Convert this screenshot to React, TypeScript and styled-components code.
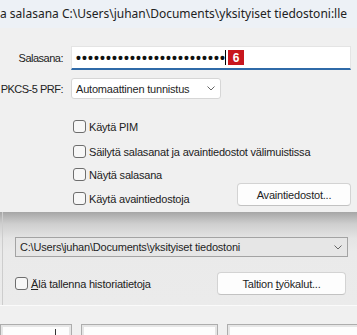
import React from "react";
import styled, { createGlobalStyle } from "styled-components";

const Global = createGlobalStyle`
  html, body { margin: 0; padding: 0; width: 357px; height: 335px; overflow: hidden; background: #f0f0f0; }
  body { font-family: "Liberation Sans", Arial, sans-serif; font-size: 11px; letter-spacing: -0.2px; color: #1f1f1f; }
  * { box-sizing: border-box; }
`;

const Page = styled.div`
  width: 357px;
  height: 335px;
  display: flex;
  flex-direction: column;
  overflow: hidden;
`;

const TitleBar = styled.div`
  height: 28px;
  flex: none;
  background: #edf1f6;
  font-family: "Noto Sans", sans-serif;
  font-size: 12px;
  letter-spacing: 0;
  line-height: 28px;
  color: #222;
  white-space: nowrap;
  overflow: hidden;
`;

const DialogBody = styled.div`
  height: 184px;
  flex: none;
  background: #f0f0f0;
  padding: 18px 6px 0 0;
  display: flex;
  flex-direction: column;
`;

const FormGrid = styled.div`
  display: grid;
  grid-template-columns: 63px 1fr;
  column-gap: 8px;
  row-gap: 8px;
  align-items: center;
`;

const FieldLabel = styled.div`
  text-align: right;
  white-space: nowrap;
  letter-spacing: -0.5px;
  color: #222;
`;

const PasswordBox = styled.div`
  height: 24px;
  background: #fff;
  border: 1px solid #e4e4e4;
  border-bottom: 2px solid #2f6aa8;
  display: flex;
  align-items: center;
  padding-left: 4px;
`;

const Dots = styled.span`
  font-weight: bold;
  font-size: 14px;
  letter-spacing: 1.1px;
  color: #111;
  line-height: 1;
`;

const Caret = styled.span`
  width: 1px;
  height: 15px;
  background: #000;
  margin-left: -1px;
`;

const Badge = styled.span`
  width: 16px;
  height: 15px;
  margin-left: 2px;
  background: #c8161d;
  color: #fff;
  font-weight: bold;
  font-size: 12px;
  letter-spacing: 0;
  display: flex;
  align-items: center;
  justify-content: center;
`;

const Select = styled.div<{ $width: number; $height: number; $tone?: "light" | "shaded" }>`
  width: ${(p) => p.$width}px;
  height: ${(p) => p.$height}px;
  background: ${(p) => (p.$tone === "shaded" ? "#e6e6e6" : "#fff")};
  border: 1px solid ${(p) => (p.$tone === "shaded" ? "#a3a3a3" : "#d6d6d6")};
  border-radius: ${(p) => (p.$tone === "shaded" ? 0 : 3)}px;
  display: flex;
  align-items: center;
  justify-content: space-between;
  padding: 0 5px 0 4px;
  white-space: nowrap;
  color: #1f1f1f;
`;

const Chevron = () => (
  <svg width="8" height="5" viewBox="0 0 8 5">
    <path d="M0.5 0.5 L4 4 L7.5 0.5" fill="none" stroke="#666" strokeWidth="1" />
  </svg>
);

const CheckList = styled.div`
  display: flex;
  flex-direction: column;
  padding-left: 73px;
`;

const CheckRow = styled.div<{ $mt: number }>`
  margin-top: ${(p) => p.$mt}px;
  display: flex;
  justify-content: space-between;
  align-items: flex-start;
`;

const CheckLabel = styled.label<{ $mt?: number }>`
  display: flex;
  align-items: center;
  gap: 3px;
  height: 15px;
  margin-top: ${(p) => p.$mt ?? 0}px;
  white-space: nowrap;
  color: #222;
`;

const Box = styled.span`
  width: 13px;
  height: 13px;
  border: 1px solid #6e6e6e;
  border-radius: 3px;
  background: #f7f7f7;
  flex: none;
`;

const Button = styled.div<{ $width: number }>`
  width: ${(p) => p.$width}px;
  height: 23px;
  flex: none;
  background: #fdfdfd;
  border: 1px solid #d3d3d3;
  border-bottom-color: #c2c2c2;
  border-radius: 4px;
  display: flex;
  align-items: center;
  justify-content: center;
  color: #1f1f1f;
  white-space: nowrap;
`;

const MainArea = styled.div`
  flex: 1;
  display: flex;
  flex-direction: column;
  background: linear-gradient(#a6a6a6 0px, #cfcfcf 12px, #e4e4e4 26px, #eaeaea 40px, #ececec 100%);
`;

const GroupBox = styled.div`
  margin-left: 2px;
  border-left: 1px solid #cdcdcd;
  padding: 25px 9px 10px 12px;
  display: flex;
  flex-direction: column;
  gap: 15px;
`;

const OptionsRow = styled.div`
  display: flex;
  justify-content: space-between;
  align-items: center;
  padding-right: 2px;
`;

const Separator = styled.div`
  height: 1px;
  background: #d6d6d6;
  border-bottom: 1px solid #fafafa;
`;

const ButtonBar = styled.div`
  flex: 1;
  background: #f0f0f0;
  padding-top: 18px;
  display: flex;
  gap: 9px;
`;

const BarButton = styled.div<{ $width: number }>`
  width: ${(p) => p.$width}px;
  height: 30px;
  flex: none;
  background: #fdfdfd;
  border: 1px solid #adadad;
  box-shadow: inset 0 0 0 2px #e6e6e6;
  position: relative;
`;

const Tick = styled.span`
  position: absolute;
  left: 54px;
  top: 4px;
  width: 1px;
  height: 7px;
  background: #333;
`;

export default function App() {
  return (
    <Page>
      <Global />
      <TitleBar>a salasana C:\Users\juhan\Documents\yksityiset tiedostoni:lle</TitleBar>
      <DialogBody>
        <FormGrid>
          <FieldLabel>Salasana:</FieldLabel>
          <PasswordBox>
            <Dots>{"•".repeat(25)}</Dots>
            <Caret />
            <Badge>6</Badge>
          </PasswordBox>
          <FieldLabel>PKCS-5 PRF:</FieldLabel>
          <Select $width={150} $height={21}>
            <span>Automaattinen tunnistus</span>
            <Chevron />
          </Select>
        </FormGrid>
        <CheckList>
          <CheckRow $mt={20}>
            <CheckLabel><Box />Käytä PIM</CheckLabel>
          </CheckRow>
          <CheckRow $mt={10}>
            <CheckLabel><Box />Säilytä salasanat ja avaintiedostot välimuistissa</CheckLabel>
          </CheckRow>
          <CheckRow $mt={8}>
            <CheckLabel><Box />Näytä salasana</CheckLabel>
          </CheckRow>
          <CheckRow $mt={1}>
            <CheckLabel $mt={8}><Box />Käytä avaintiedostoja</CheckLabel>
            <Button $width={114}>Avaintiedostot...</Button>
          </CheckRow>
        </CheckList>
      </DialogBody>
      <MainArea>
        <GroupBox>
          <Select $width={333} $height={20} $tone="shaded">
            <span>C:\Users\juhan\Documents\yksityiset tiedostoni</span>
            <Chevron />
          </Select>
          <OptionsRow>
            <CheckLabel><Box /><span><u>Ä</u>lä tallenna historiatietoja</span></CheckLabel>
            <Button $width={129}>Taltion&nbsp;<u>t</u>yökalut...</Button>
          </OptionsRow>
        </GroupBox>
        <Separator />
        <ButtonBar>
          <BarButton $width={72}><Tick /></BarButton>
          <BarButton $width={137} />
          <BarButton $width={140} />
        </ButtonBar>
      </MainArea>
    </Page>
  );
}
